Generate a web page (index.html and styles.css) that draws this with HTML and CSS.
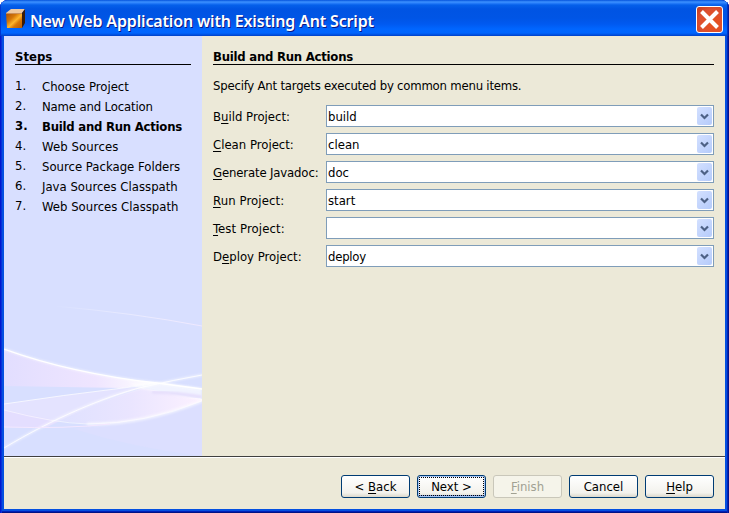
FILE: index.html
```html
<!DOCTYPE html>
<html lang="en">
<head>
<meta charset="utf-8">
<title>New Web Application with Existing Ant Script</title>
<link rel="stylesheet" href="styles.css">
</head>
<body>
<div class="window">
  <header class="titlebar">
    <svg class="cube" width="20" height="20" viewBox="0 0 20 20">
      <defs><linearGradient id="front" x1="0" y1="0" x2="1" y2="1"><stop offset="0" stop-color="#a84c08"/><stop offset=".35" stop-color="#d47708"/><stop offset=".55" stop-color="#ffb52c"/><stop offset=".7" stop-color="#d97808"/><stop offset="1" stop-color="#b85a06"/></linearGradient></defs>
      <path d="M0 4 5 0h14l-3 4z" fill="#efc9a0"/>
      <path d="M16 4 19 0v14l-3 5z" fill="#3c1c08"/>
      <path d="M0 4h16v15H1z" fill="url(#front)"/>
      <path d="M0 4.500h16" stroke="#c98e5a"/>
    </svg>
    <h1 class="title">New Web Application with Existing Ant Script</h1>
    <button class="close" aria-label="Close"><svg width="27" height="27" viewBox="0 0 27 27"><path d="M5.500 5.500 21.500 21.500M21.500 5.500 5.500 21.500" stroke="#fff" stroke-width="4" fill="none"/></svg></button>
  </header>
  <main class="body">
    <aside class="steps">
      <h2 class="heading">Steps</h2>
      <ol class="list">
        <li><span class="num">1.</span><span>Choose Project</span></li>
        <li><span class="num">2.</span><span class="tight">Name and Location</span></li>
        <li class="current"><span class="num">3.</span><span class="tighter">Build and Run Actions</span></li>
        <li><span class="num">4.</span><span class="wide">Web Sources</span></li>
        <li><span class="num">5.</span><span>Source Package Folders</span></li>
        <li><span class="num">6.</span><span>Java Sources Classpath</span></li>
        <li><span class="num">7.</span><span>Web Sources Classpath</span></li>
      </ol>
      <svg class="waves" width="198" height="156" viewBox="0 0 198 156" fill="none">
        <defs>
          <linearGradient id="upper" x1="0" y1="0" x2="1" y2="0"><stop offset="0" stop-color="#e2deff"/><stop offset=".6" stop-color="#efe5ff"/><stop offset="1" stop-color="#fff"/></linearGradient>
          <linearGradient id="lower" x1="0" y1="0" x2="1" y2="0"><stop offset="0" stop-color="#dfe1ff"/><stop offset=".5" stop-color="#eae5ff"/><stop offset="1" stop-color="#fcf1ff"/></linearGradient>
          <linearGradient id="fade" x1="0" y1="0" x2="1" y2="0"><stop offset="0" stop-color="#fff" stop-opacity="0"/><stop offset="1" stop-color="#efe8ff"/></linearGradient>
          <filter id="soft" x="-10%" y="-20%" width="120%" height="140%"><feGaussianBlur stdDeviation="1.300"/></filter>
        </defs>
        <path d="M50 6Q130 13 198 26" stroke="url(#fade)"/>
        <path d="M70 129Q145 114 198 101V156Q130 148 70 129z" fill="#dcdfff"/>
        <path d="M0 49Q66 73 153 83L119 88 0 86z" fill="url(#upper)"/>
        <path d="M0 104Q60 95 119 88L141 87Q105 97 56 121 28 118 0 110z" fill="#e4e3ff"/>
        <path d="M0 110Q30 116 56 121L43 127H0z" fill="#e4deff"/>
        <path d="M56 121Q92 102 139 88L198 99V101Q132 126 83 124z" fill="url(#lower)"/>
        <path d="M125 84 153 82 198 89V100L139 89z" fill="#fff" opacity=".65" filter="url(#soft)"/>
        <path d="M148 92Q175 93 198 97" stroke="#e5ddfc" stroke-width="3" filter="url(#soft)"/>
        <g stroke="#fff" stroke-width="2" opacity=".6" filter="url(#soft)">
          <path d="M0 49Q66 73 153 83L198 89"/>
          <path d="M0 148C50 118 100 97 139 87Q170 80 198 75"/>
          <path d="M83 124Q137 125 198 101" stroke-width="3"/>
        </g>
        <g stroke="#fff" stroke-width="1">
          <path d="M0 49Q66 73 153 83L198 89" stroke-width="1.300"/>
          <path d="M0 104Q60 95 119 88 139 86 153 83" opacity=".7"/>
          <path d="M0 148C50 118 100 97 139 87Q170 80 198 75" opacity=".8"/>
          <path d="M0 110Q50 123 83 124 142 124 198 101" opacity=".55"/>
          <path d="M0 127Q63 129 106 124" stroke="#f4e8ff"/>
        </g>
      </svg>
    </aside>
    <section class="panel">
      <h2 class="heading tighter">Build and Run Actions</h2>
      <p class="intro">Specify Ant targets executed by common menu items.</p>
      <div class="form">
        <label>B<u>u</u>ild Project:</label><div class="combo"><span>build</span><i><svg width="9" height="7" viewBox="0 0 9 7"><path d="m1 1.500 3.500 3.500L8 1.500"/></svg></i></div>
        <label><u>C</u>lean Project:</label><div class="combo"><span>clean</span><i><svg width="9" height="7" viewBox="0 0 9 7"><path d="m1 1.500 3.500 3.500L8 1.500"/></svg></i></div>
        <label class="tight"><u>G</u>enerate Javadoc:</label><div class="combo"><span>doc</span><i><svg width="9" height="7" viewBox="0 0 9 7"><path d="m1 1.500 3.500 3.500L8 1.500"/></svg></i></div>
        <label class="wide"><u>R</u>un Project:</label><div class="combo"><span>start</span><i><svg width="9" height="7" viewBox="0 0 9 7"><path d="m1 1.500 3.500 3.500L8 1.500"/></svg></i></div>
        <label class="wide"><u>T</u>est Project:</label><div class="combo"><span></span><i><svg width="9" height="7" viewBox="0 0 9 7"><path d="m1 1.500 3.500 3.500L8 1.500"/></svg></i></div>
        <label>D<u>e</u>ploy Project:</label><div class="combo"><span class="tighter">deploy</span><i><svg width="9" height="7" viewBox="0 0 9 7"><path d="m1 1.500 3.500 3.500L8 1.500"/></svg></i></div>
      </div>
    </section>
  </main>
  <footer class="actions">
    <button class="btn">&lt; <u>B</u>ack</button>
    <button class="btn focused">Next &gt;</button>
    <button class="btn disabled" disabled><u>F</u>inish</button>
    <button class="btn">Cancel</button>
    <button class="btn"><u>H</u>elp</button>
  </footer>
</div>
</body>
</html>
```
FILE: styles.css
```css
* { box-sizing: border-box; }
body { margin: 0; background: #fff; color: #000; font: 13px/20px "DejaVu Sans Condensed", "Noto Sans", sans-serif; }
h1, h2, p, ol { margin: 0; padding: 0; }
ol { list-style: none; }
button { font: inherit; padding: 0; margin: 0; }
u { text-decoration: underline; text-decoration-thickness: 1px; text-underline-offset: 2px; text-decoration-skip-ink: none; }
.tight { letter-spacing: -.15px; }
.tighter { letter-spacing: -.24px; }
.wide { letter-spacing: .1px; }
.window {
  width: 729px; height: 513px; padding: 0 4px 4px; overflow: hidden;
  display: flex; flex-direction: column;
  border-radius: 8px 8px 0 0; background: #0450e0;
  box-shadow: inset 1px 0 #0019cf, inset 2px 0 #0831d9, inset -1px 0 #001390, inset -2px 0 #0525b5, inset 0 -1px #001385, inset 0 -2px #0020b8;
}
.titlebar {
  height: 36px; flex: none; margin: 0 -4px; padding: 3px 6px 0;
  display: flex; align-items: center;
  background: linear-gradient(#0453dc 0, #3d92ff 2px, #2a80fb 3px, #0560ea 5px, #0054e3 9px, #0055e5 18px, #0059f0 24px, #0066ff 29px, #0065fd 33px, #004ddb 35px, #0040c5 36px);
  box-shadow: inset 1px 0 #0036d0, inset -1px 0 #001da0, inset -2px 0 #0034c4;
}
.cube { flex: none; margin-top: -1px; }
.title { margin-left: 4px; flex: 1; color: #fff; font: 600 16px/24px "Noto Sans", sans-serif; letter-spacing: -.16px; margin-top: 2px; white-space: nowrap; text-shadow: 1px 1px #0a1883; }
.close { flex: none; width: 27px; height: 27px; border: 1px solid #fff; border-radius: 3px; background: radial-gradient(circle at 65% 65%, #e8501c, #dc5030 60%, #c43c1c); display: grid; place-items: center; }
.close svg { width: 27px; height: 27px; margin: -1px; }
.body { height: 420px; flex: none; display: flex; background: #ece9d8; }
.steps { width: 198px; background: #d8dfff; display: flex; flex-direction: column; }
.heading { font-size: 13px; line-height: 17px; border-bottom: 1px solid #000; height: 17px; }
.steps .heading { margin: 12px 11px 0; }
.list { margin: 12px 0 0 11px; }
.list li { display: flex; height: 20px; white-space: nowrap; }
.num { width: 27px; margin-top: -1px; }
.current { font-weight: bold; }
.waves { margin-top: auto; display: block; }
.panel { flex: 1; padding: 12px 11px 0; }
.intro { margin-top: 11px; letter-spacing: -.21px; white-space: nowrap; }
.form { margin-top: 9px; display: grid; grid-template-columns: 113px 388px; grid-auto-rows: 22px; row-gap: 6px; }
.form label { line-height: 23px; white-space: nowrap; }
.combo { border: 1px solid #7f9db9; background: #fff; display: flex; justify-content: space-between; padding: 1px; line-height: 19px; }
.combo i { width: 15px; height: 18px; border-radius: 2px; background: linear-gradient(135deg, #d3e0ff, #b5cbfb); display: grid; place-items: center; }
.combo path { fill: none; stroke: #4d6185; stroke-width: 2.200; }
.actions { flex: 1; border-top: 1px solid #404040; box-shadow: inset 0 1px #fff; background: #ece9d8; padding: 18px 11px 0; display: flex; justify-content: flex-end; gap: 7px; }
.btn { width: 69px; height: 23px; line-height: 20px; border: 1px solid #003c74; border-radius: 3px; background: linear-gradient(#fff, #f3f2ed 80%, #dcd8cb); color: #000; white-space: nowrap; }
.focused { box-shadow: inset 0 0 0 1px #a9c5f3, inset 0 -2px #7d9fe0; outline: 1px dotted #000; outline-offset: -3px; }
.disabled { border-color: #c9c7ba; background: #f5f4ea; color: #a1a192; }
```
